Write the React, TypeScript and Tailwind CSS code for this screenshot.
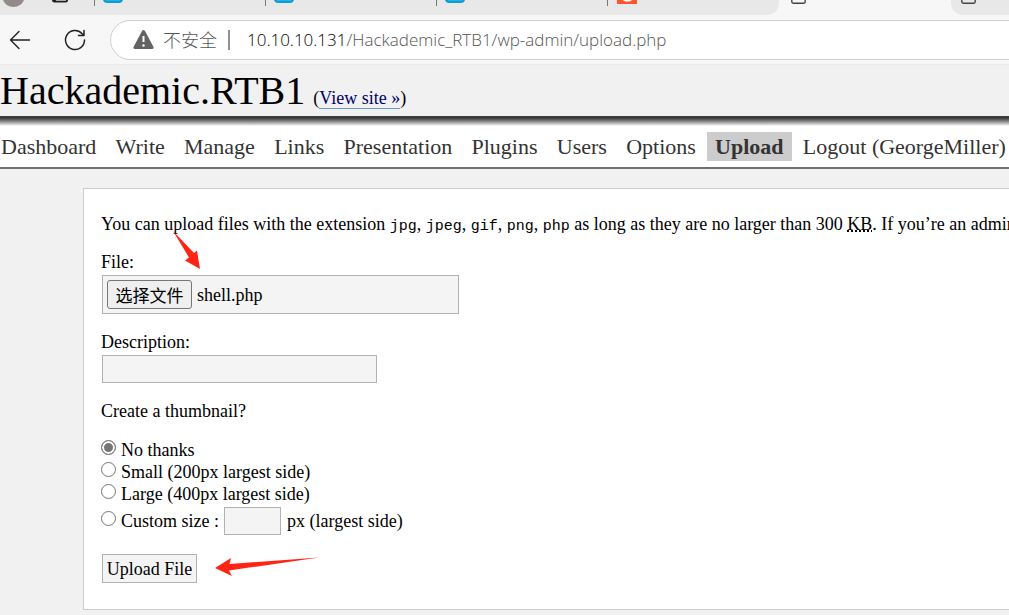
import { useRef, useState } from "react";
import clsx from "clsx";

const menu = [
  "Dashboard",
  "Write",
  "Manage",
  "Links",
  "Presentation",
  "Plugins",
  "Users",
  "Options",
  "Upload",
  "Logout (GeorgeMiller)",
];

const extensions = ["jpg", "jpeg", "gif", "png", "php"];

function BlueFavicon() {
  return (
    <svg className="ml-2 h-[3px] w-[20px] shrink-0" viewBox="0 0 20 3" aria-hidden="true">
      <path d="M0 0H20Q19 3 16 3H4Q1 3 0 0Z" fill="#129bd0" />
      <path d="M3 0H17V1H3Z" fill="#1fb5e8" />
    </svg>
  );
}

function OrangeFavicon() {
  return (
    <svg className="ml-[9px] h-[4px] w-[20px] shrink-0" viewBox="0 0 20 4" aria-hidden="true">
      <path d="M0 0H20V4H0Z" fill="#fc5531" />
      <path d="M6 0H15Q14 1.5 11 1.5Q7 1.5 6 0Z" fill="#fff" />
    </svg>
  );
}

function PageIcon() {
  return (
    <svg className="h-[4px] w-[15px] shrink-0" viewBox="0 0 15 4" fill="none" aria-hidden="true">
      <path d="M.8 0V1.8Q.8 3.2 2.3 3.2H12.7Q14.2 3.2 14.2 1.8V0" stroke="#444" strokeWidth="1.4" />
    </svg>
  );
}

function TabStrip() {
  return (
    <div className="flex h-[15px] items-start overflow-hidden bg-[#f7f7f7]">
      <div className="flex h-[15px] w-[779px] shrink-0 items-start rounded-br-xl bg-[#e8e8e8]">
        <div className="flex w-[94px] shrink-0 items-start pl-[3px]">
          <svg className="h-[7px] w-[21px]" viewBox="0 0 21 7" aria-hidden="true">
            <path d="M0 0H21Q18 7 10.500 7Q3 7 0 0Z" fill="#928b89" />
          </svg>
          <svg className="ml-[27px] h-[3px] w-[18px]" viewBox="0 0 18 3" aria-hidden="true">
            <path d="M1 0H17Q17 2.500 14.500 2.500H3.500Q1 2.500 1 0Z" fill="#222" />
            <path d="M5 0H15V1H5Z" fill="#aaa" />
          </svg>
        </div>
        {[0, 1, 2, 3].map((tab) => (
          <div key={tab} className="flex w-[171px] shrink-0 items-start">
            <span className="h-1.5 w-px bg-[#777]" />
            {tab < 3 ? <BlueFavicon /> : <OrangeFavicon />}
          </div>
        ))}
      </div>
      <div className="w-[172px] shrink-0 pl-3">
        <PageIcon />
      </div>
      <div className="h-[15px] grow rounded-bl-xl bg-[#e8e8e8] pl-[10px]">
        <PageIcon />
      </div>
    </div>
  );
}

function AddressBar() {
  return (
    <div className="flex h-[50px] items-center overflow-hidden border-b border-[#ebebeb] bg-[#f7f7f7] font-['Open_Sans','Noto_Sans_CJK_SC',sans-serif]">
      <button type="button" aria-label="Back" className="ml-[9px] shrink-0">
        <svg className="size-[22px]" viewBox="0 0 22 22" fill="none" stroke="#222" strokeWidth="1.4" strokeLinecap="round" strokeLinejoin="round">
          <path d="M20.500 11H1.500M10 2.500L1.500 11L10 19.500" />
        </svg>
      </button>
      <button type="button" aria-label="Refresh" className="ml-8 shrink-0">
        <svg className="size-6" viewBox="0 0 24 24" fill="none" stroke="#222" strokeWidth="1.5" strokeLinecap="round" strokeLinejoin="round">
          <path d="M21.500 12A9.500 9.500 0 1 1 18.900 5.500L21 7.500M21 2.500V7.500H15.500" />
        </svg>
      </button>
      <div className="-mr-6 ml-[23px] flex h-10 grow items-center rounded-full border border-[#cfcfcf] bg-white pl-[22px]">
        <svg className="h-5 w-[21px] shrink-0" viewBox="0 0 21 20" aria-hidden="true">
          <path d="M9 1Q10.500-.8 12 1L20.500 17Q21 19 19 19H2Q0 19 .5 17Z" fill="#636363" />
          <path d="M10.500 6V12" stroke="#fff" strokeWidth="2" />
          <circle cx="10.500" cy="15.500" r="1.200" fill="#fff" />
        </svg>
        <span className="ml-[9px] shrink-0 text-[18px] leading-6 font-light whitespace-nowrap text-[#555]">不安全</span>
        <span className="ml-[11px] h-5 w-0.5 shrink-0 bg-[#909090]" />
        <span className="ml-[17px] text-[17px] leading-6 font-light whitespace-nowrap text-[#555]">
          <span className="text-black">10.10.10.131</span>/Hackademic_RTB1/wp-admin/upload.php
        </span>
      </div>
    </div>
  );
}

const field = "border border-[#b2b2b2] bg-[#f4f4f4]";

function Radio({ value, label, checked, onSelect }: { value: string; label: string; checked: boolean; onSelect: (v: string) => void }) {
  return (
    <label className="flex items-start gap-[5px]">
      <input
        type="radio"
        name="thumbnail"
        value={value}
        checked={checked}
        onChange={() => onSelect(value)}
        className="mt-px size-[15px] shrink-0 appearance-none rounded-full border border-[#767676] bg-white checked:bg-[#767676] checked:shadow-[inset_0_0_0_2px_white]"
      />
      {label}
    </label>
  );
}

function UploadForm() {
  const picker = useRef<HTMLInputElement>(null);
  const [fileName, setFileName] = useState("shell.php");
  const [size, setSize] = useState("none");

  return (
    <form className="relative flex flex-col items-start" onSubmit={(e) => e.preventDefault()}>
      <label htmlFor="file" className="mt-4 mb-0.5">File:</label>
      <div className={clsx(field, "ml-px flex h-[39px] w-[357px] items-center gap-[5px] px-1")}>
        <input
          ref={picker}
          id="file"
          type="file"
          className="hidden"
          onChange={(e) => setFileName(e.target.files?.[0]?.name ?? "")}
        />
        <button
          type="button"
          onClick={() => picker.current?.click()}
          className="h-[29px] w-[85px] rounded-[3px] border border-[#767676] bg-[#efefef] font-['Noto_Sans_CJK_SC',sans-serif] text-[17px] leading-6 whitespace-nowrap"
        >
          选择文件
        </button>
        <span>{fileName}</span>
      </div>

      <label htmlFor="description" className="mt-[17px] mb-0.5">Description:</label>
      <input id="description" type="text" className={clsx(field, "ml-px h-7 w-[275px] px-1")} />

      <fieldset className="mt-[17px]">
        <legend>Create a thumbnail?</legend>
        <div className="mt-[17px] flex flex-col items-start">
          <Radio value="none" label="No thanks" checked={size === "none"} onSelect={setSize} />
          <Radio value="small" label="Small (200px largest side)" checked={size === "small"} onSelect={setSize} />
          <Radio value="large" label="Large (400px largest side)" checked={size === "large"} onSelect={setSize} />
          <div className="flex h-[31px] items-center">
            <Radio value="custom" label="Custom size :" checked={size === "custom"} onSelect={setSize} />
            <input type="text" aria-label="Custom size in pixels" className={clsx(field, "ml-[5px] h-7 w-[57px] px-1")} />
            <span className="ml-1.5">px (largest side)</span>
          </div>
        </div>
      </fieldset>

      <button type="submit" className={clsx(field, "mt-[18px] ml-px h-[29px] w-[95px] whitespace-nowrap")}>
        Upload File
      </button>

      <svg className="pointer-events-none absolute -top-1 left-[72px] h-[38px] w-[29px]" viewBox="0 0 29 38" aria-hidden="true">
        <path d="M0 0L21 22L24 19.500L27 38L12 29.500L16 26.500Z" fill="#ff2413" />
      </svg>
      <svg className="pointer-events-none absolute bottom-[6px] left-[114px] h-[20px] w-[104px]" viewBox="0 0 104 20" aria-hidden="true">
        <path d="M0 11L16 1L14.500 7L104 .5L14 13.500L17 19Z" fill="#ff2413" />
      </svg>
    </form>
  );
}

export default function App() {
  return (
    <div className="min-h-screen overflow-hidden bg-[#f1f1f1] font-['Liberation_Serif',serif] text-[18px] leading-[22px] text-black">
      <TabStrip />
      <AddressBar />

      <header className="flex h-[51px] items-baseline overflow-hidden whitespace-nowrap">
        <h1 className="text-[40px] leading-[52px]">Hackademic.RTB1</h1>
        <span className="ml-2">
          (<a href="#site" className="border-b border-[#6699cc] text-[#000066]">View site »</a>)
        </span>
      </header>

      <nav className="border-b-2 border-[#6d716d] bg-white">
        <div className="h-2.5 bg-linear-to-b from-[#3a3c3a] from-20% to-white" />
        <ul className="flex items-center justify-between pt-1.5 pr-[3px] pb-1.5 pl-px text-[22px] leading-[29px] whitespace-nowrap text-[#333]">
          {menu.map((item) => (
            <li key={item}>
              <a
                href="#menu"
                className={clsx("block", item === "Upload" && "-mx-2 bg-[#cccccc] px-2 font-bold")}
              >
                {item}
              </a>
            </li>
          ))}
        </ul>
      </nav>

      <main className="mt-[19px] -mr-6 ml-[83px] border border-[#cccccc] bg-white px-[17px] pt-6 pb-[26px]">
        <p className="whitespace-nowrap">
          You can upload files with the extension{" "}
          {extensions.map((ext, i) => (
            <span key={ext}>
              <code className="font-['Liberation_Mono',monospace] text-[15px] leading-none">{ext}</code>
              {i < extensions.length - 1 ? ", " : " "}
            </span>
          ))}
          as long as they are no larger than 300{" "}
          <abbr title="Kilobytes" className="underline decoration-dotted">KB</abbr>. If you’re an administrator
        </p>
        <UploadForm />
      </main>
    </div>
  );
}
